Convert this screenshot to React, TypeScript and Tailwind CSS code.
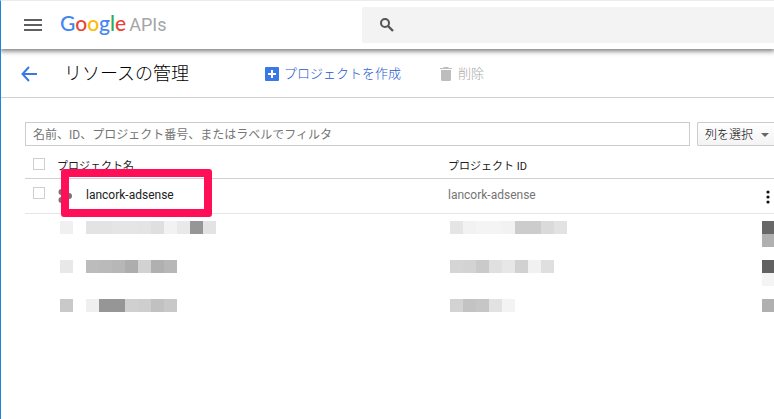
import React from "react";

function MenuIcon() {
  return (
    <svg width="18" height="12" viewBox="0 0 18 12" fill="#5f5f5f" aria-hidden="true">
      <path d="M0 0h18v2H0zM0 5h18v2H0zM0 10h18v2H0z" />
    </svg>
  );
}

function SearchIcon() {
  return (
    <svg width="14" height="14" viewBox="0 0 14 14" fill="none" stroke="#555" strokeWidth="2" aria-hidden="true">
      <circle cx="5" cy="5" r="4" />
      <path d="M8 8l5 5" strokeWidth="2.4" />
    </svg>
  );
}

function BackIcon() {
  return (
    <svg width="16" height="16" viewBox="0 0 16 16" fill="none" stroke="#3b78e7" strokeWidth="2" aria-hidden="true">
      <path d="M8 1L1.500 8L8 15M1.500 8H16" />
    </svg>
  );
}

function AddIcon() {
  return (
    <svg width="14" height="14" viewBox="0 0 14 14" aria-hidden="true">
      <rect width="14" height="14" rx="1" fill="#3b78e7" />
      <path d="M7 3v8M3 7h8" stroke="#fff" strokeWidth="2" />
    </svg>
  );
}

function TrashIcon() {
  return (
    <svg width="12" height="14" viewBox="0 0 12 14" fill="#bdbdbd" aria-hidden="true">
      <path d="M4 0h4l1 1h3v1H0V1h3zM1 3h10v9.500q0 1.500-1.500 1.500h-7Q1 14 1 12.500z" />
    </svg>
  );
}

function ProjectIcon() {
  return (
    <svg width="14" height="14" viewBox="0 0 14 14" fill="#757575" aria-hidden="true">
      <circle cx="3.500" cy="3" r="3" />
      <circle cx="11" cy="7" r="3" />
      <circle cx="3.500" cy="11" r="3" />
    </svg>
  );
}

function Mosaic({ colors }: { colors: string[] }) {
  return (
    <div className="flex">
      {colors.map((c, i) => (
        <span key={i} className="size-[13px] shrink-0" style={{ backgroundColor: c }} />
      ))}
    </div>
  );
}

const maskedRows = [
  {
    icon: ["#f0f0f0"],
    name: ["#e3e3e3", "#e3e3e3", "#e5e5e5", "#e5e5e5", "#e4e4e4", "#dfdfdf", "#f2f2f2", "#e9e9e9", "#969696", "#e3e3e3"],
    id: ["#e5e5e5", "#f2f2f2", "#f4f4f4", "#f4f4f4", "#f2f2f2", "#cccccc", "#cccccc", "#dadada", "#e2e2e2"],
    menu: ["#686868", "#b0b0b0"],
  },
  {
    icon: ["#e8e8e8"],
    name: ["#bcbcbc", "#bababa", "#b7b7b7", "#adadad", "#d2d2d2", "#b0b0b0", "#b7b7b7"],
    id: ["#d5d5d5", "#d3d3d3", "#cacaca", "#e0e0e0", "#e7e7e7", "#d1d1d1", "#f1f1f1", "#dfdfdf"],
    menu: ["#616161", "#f4f4f4"],
  },
  {
    icon: ["#c9c9c9"],
    name: ["#efefef", "#969696", "#969696", "#d0d0d0", "#cecece", "#c1c1c1", "#c8c8c8"],
    id: ["#d3d3d3", "#c3c3c3", "#c6c6c6", "#e2e2e2", "#f3f3f3"],
    menu: ["#b0b0b0"],
  },
];

const checkbox = "block size-3 appearance-none border border-[#cfcfcf] bg-white";
const headCell = "h-[30px] border-b border-[#d0d0d0] p-0 font-normal";
const bodyCell = "h-[35px] border-b border-[#e5e5e5] p-0";

export default function App() {
  return (
    <div className="min-h-screen overflow-hidden border-t border-l border-t-[#ebebeb] border-l-[#1b87dc] bg-white font-[Roboto,'Noto_Sans_CJK_JP',sans-serif] text-[#212121]">
      <header className="relative flex h-12 items-center bg-white pl-[23px] shadow-[0_1px_5px_1px_rgba(0,0,0,0.55)]">
        <button type="button" aria-label="メニュー" className="shrink-0">
          <MenuIcon />
        </button>
        <div className="ml-[18px] flex w-[302px] shrink-0 items-baseline gap-[3px] pb-[2px] leading-6">
          <span className="font-[Lato,sans-serif] text-[21px] leading-6 font-medium">
            <span className="text-[#4285f4]">G</span>
            <span className="text-[#ea4335]">o</span>
            <span className="text-[#fbbc05]">o</span>
            <span className="text-[#4285f4]">g</span>
            <span className="text-[#34a853]">l</span>
            <span className="text-[#ea4335]">e</span>
          </span>
          <span className="text-lg leading-6 text-[#a5a5a5]">APIs</span>
        </div>
        <label className="flex h-9 flex-1 items-center gap-3 rounded-l-xs bg-[#f3f3f3] pl-[18px]">
          <SearchIcon />
          <input type="search" aria-label="検索" className="min-w-0 flex-1 bg-transparent text-sm outline-none" />
        </label>
      </header>

      <div className="flex h-[49px] items-center border-b border-[#d0d0d0] pt-px pl-5">
        <button type="button" aria-label="戻る">
          <BackIcon />
        </button>
        <h1 className="ml-[27px] w-[201px] pt-px text-lg leading-6 font-light text-black">リソースの管理</h1>
        <button type="button" className="flex items-center gap-[5px] pt-px text-[13px] leading-5 font-light text-[#2457d0]">
          <AddIcon />
          プロジェクトを作成
        </button>
        <button type="button" disabled className="ml-[39px] flex items-center gap-[6px] pt-px text-[13px] leading-5 font-light text-[#a8a8a8]">
          <TrashIcon />
          削除
        </button>
      </div>

      <main className="relative pt-6 pl-6">
        <div className="flex gap-[7px]">
          <input
            type="text"
            aria-label="フィルタ"
            placeholder="名前、ID、プロジェクト番号、またはラベルでフィルタ"
            className="h-6 min-w-0 flex-1 border border-[#cccccc] px-[7px] pt-[2px] text-xs outline-none placeholder:text-[#757575]"
          />
          <button
            type="button"
            className="flex h-6 w-[77px] shrink-0 items-center gap-2 rounded-l-xs border border-r-0 border-[#cccccc] bg-linear-to-b from-white to-[#f3f3f3] pt-px pl-[7px] text-xs font-light text-black"
          >
            列を選択
            <svg width="8" height="4" viewBox="0 0 8 4" fill="#666" aria-hidden="true">
              <path d="M0 0h8L4 4z" />
            </svg>
          </button>
        </div>

        <table className="mt-[3px] w-full table-fixed border-separate border-spacing-0 text-left">
          <colgroup>
            <col className="w-8" />
            <col className="w-[29px]" />
            <col className="w-[362px]" />
            <col />
            <col className="w-3" />
          </colgroup>
          <thead>
            <tr className="text-[11px] leading-4">
              <th className={headCell}>
                <input type="checkbox" aria-label="すべて選択" className={`${checkbox} ml-2`} />
              </th>
              <th colSpan={2} className={headCell}>
                <div className="pt-[6px]">プロジェクト名</div>
              </th>
              <th className={headCell}>
                <div className="pt-[6px]">プロジェクト ID</div>
              </th>
              <th className={headCell} />
            </tr>
          </thead>
          <tbody>
            <tr className="text-xs leading-4">
              <td className={bodyCell}>
                <input type="checkbox" aria-label="lancork-adsense を選択" className={`${checkbox} mb-[6px] ml-2`} />
              </td>
              <td className={bodyCell}>
                <div className="pl-px">
                  <ProjectIcon />
                </div>
              </td>
              <td className={bodyCell}>
                <div className="pb-[2px]">lancork-adsense</div>
              </td>
              <td className={`${bodyCell} text-[#757575]`}>
                <div className="pb-[2px]">lancork-adsense</div>
              </td>
              <td className={bodyCell}>
                <button type="button" aria-label="操作" className="mt-[2px] ml-1 block">
                  <svg width="4" height="14" viewBox="0 0 4 14" fill="#111" aria-hidden="true">
                    <circle cx="2" cy="2" r="1.600" />
                    <circle cx="2" cy="7" r="1.600" />
                    <circle cx="2" cy="12" r="1.600" />
                  </svg>
                </button>
              </td>
            </tr>
            {maskedRows.map((row, i) => (
              <tr key={i} className="h-[39px] align-top">
                <td className="p-0" />
                <td className="p-0 pt-[7px] pl-[3px]">
                  <Mosaic colors={row.icon} />
                </td>
                <td className="p-0 pt-[7px]">
                  <Mosaic colors={row.name} />
                </td>
                <td className="p-0 pt-[7px] pl-[2px]">
                  <Mosaic colors={row.id} />
                </td>
                <td className="p-0 pt-[7px]">
                  {row.menu.map((c, j) => (
                    <div key={j} className="h-[13px] w-full" style={{ backgroundColor: c }} />
                  ))}
                </td>
              </tr>
            ))}
          </tbody>
        </table>
        <div className="pointer-events-none absolute top-[71px] left-[60px] h-12 w-[151px] rounded-[3px] border-8 border-[#ff0f58]" />
      </main>
    </div>
  );
}
